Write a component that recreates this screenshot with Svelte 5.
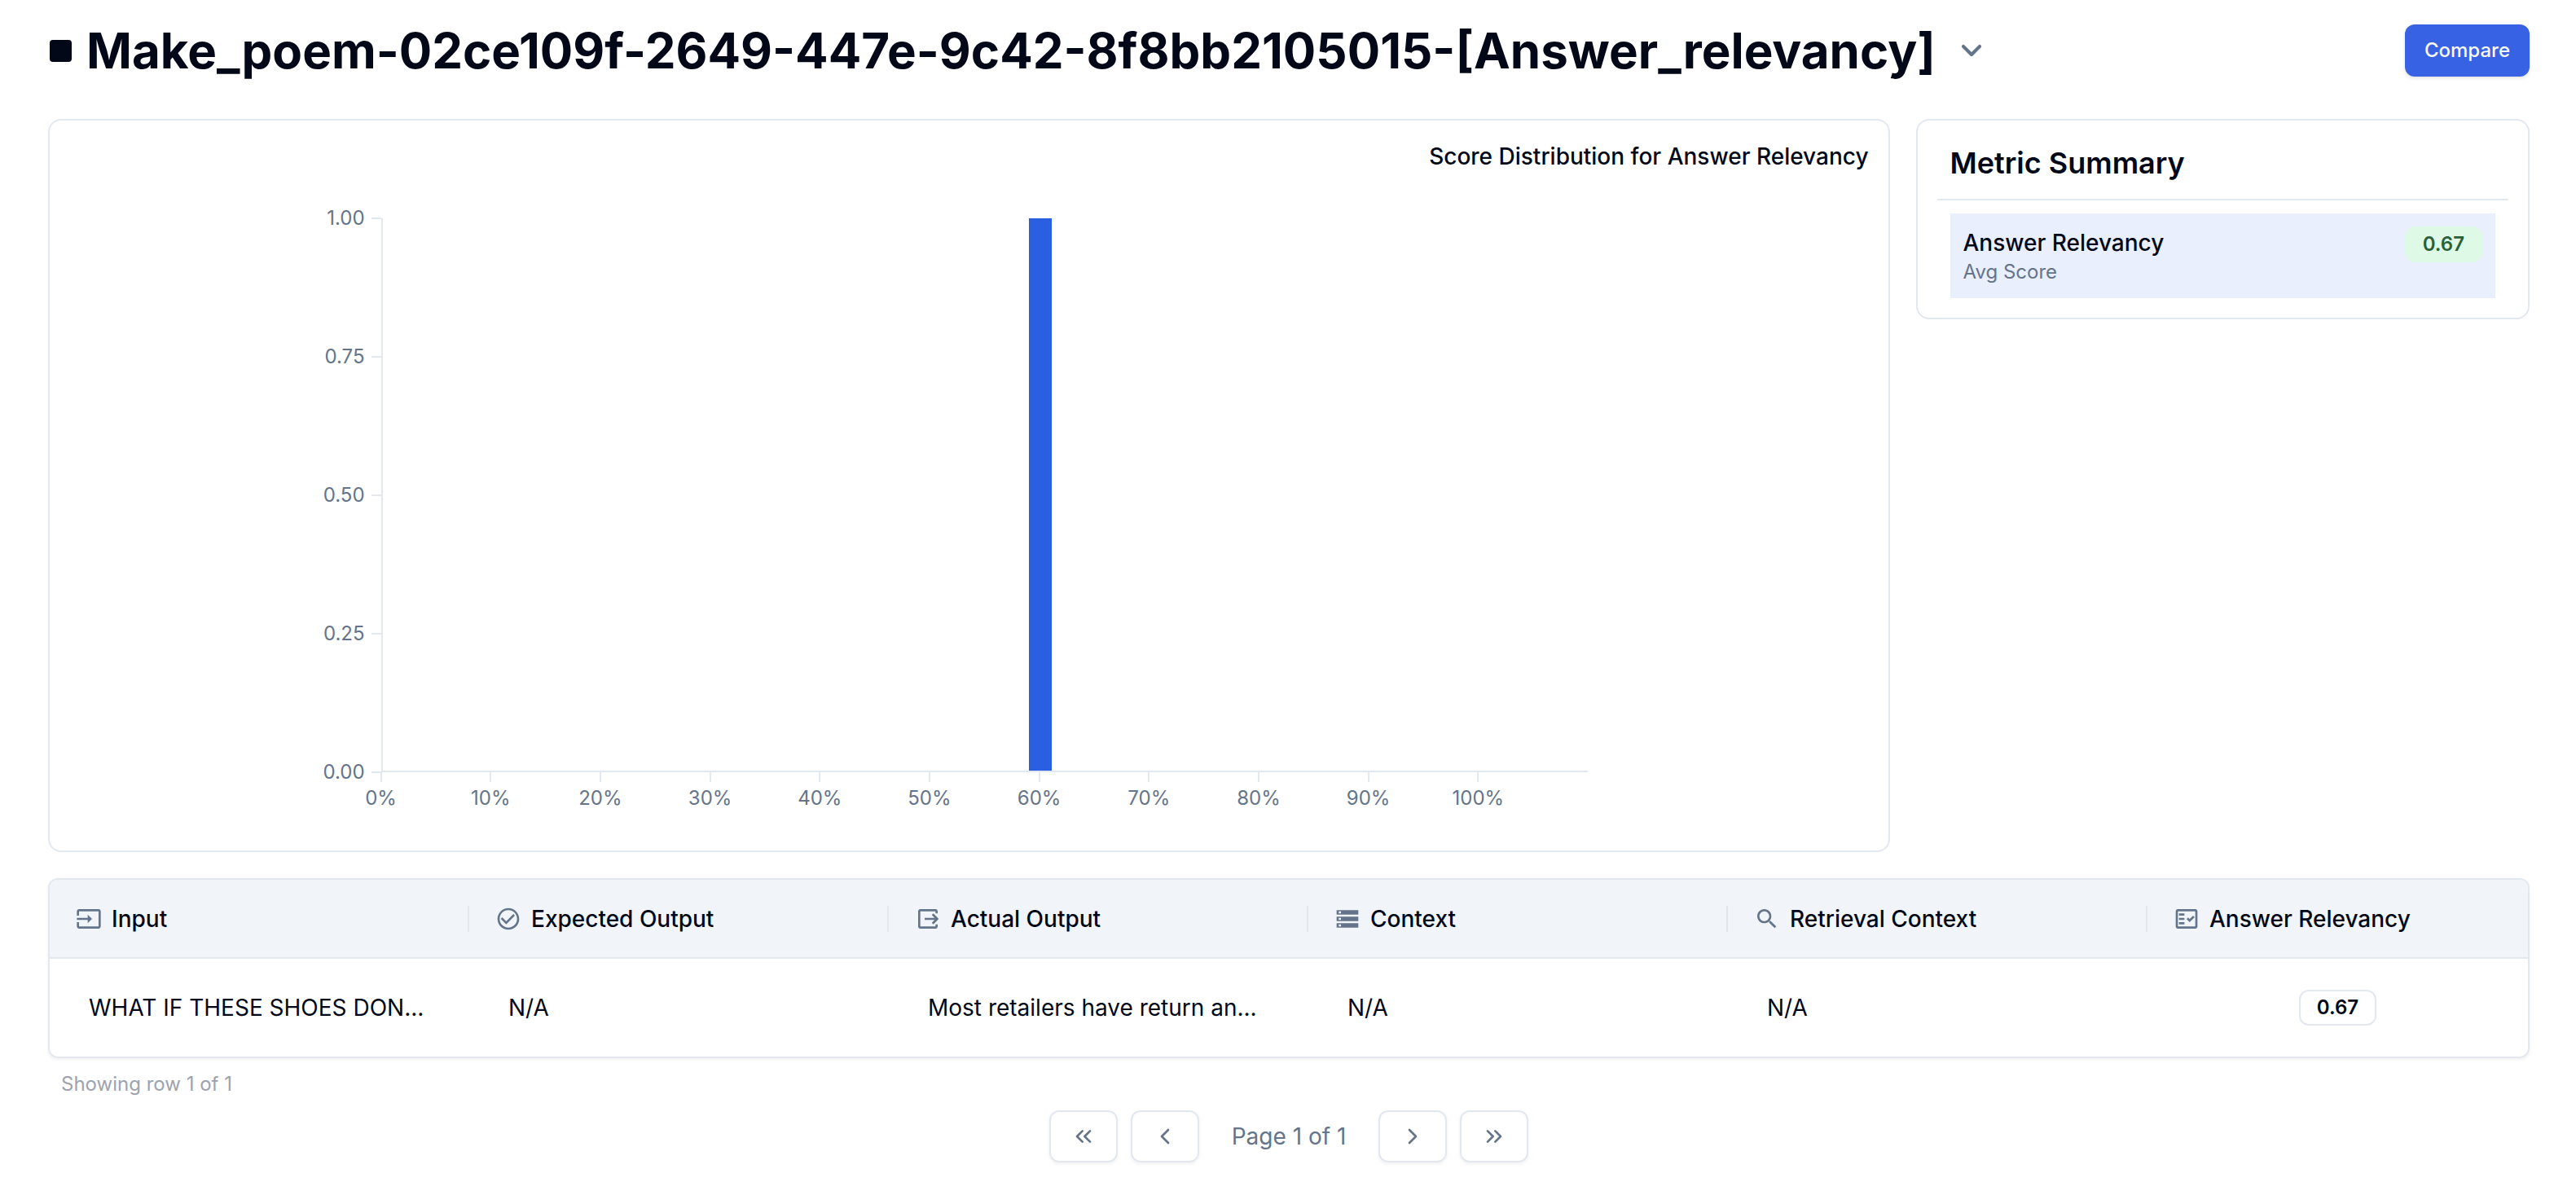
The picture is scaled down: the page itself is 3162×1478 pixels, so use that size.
<script>
  const ticksY = ['1.00', '0.75', '0.50', '0.25', '0.00'];
  const bins = [0, 0, 0, 0, 0, 0, 1, 0, 0, 0, 0];
  const columns = [
    { label: 'Input', icon: 'input' },
    { label: 'Expected Output', icon: 'check' },
    { label: 'Actual Output', icon: 'output' },
    { label: 'Context', icon: 'storage' },
    { label: 'Retrieval Context', icon: 'search' },
    { label: 'Answer Relevancy', icon: 'fact' }
  ];
  const icons = {
    input: 'M21 3.01H3c-1.1 0-2 .9-2 2V9h2V4.99h18v14.03H3V15H1v4.01c0 1.1.9 1.98 2 1.98h18c1.1 0 2-.88 2-1.98v-14c0-1.11-.9-2-2-2zM11 16l4-4-4-4v3H1v2h10v3z',
    check: 'M16.59 7.58L10 14.17l-3.59-3.58L5 12l5 5 8-8zM12 2C6.48 2 2 6.48 2 12s4.48 10 10 10 10-4.48 10-10S17.52 2 12 2zm0 18c-4.42 0-8-3.58-8-8s3.58-8 8-8 8 3.58 8 8-3.58 8-8 8z',
    output: 'M17 17l5-5-5-5-1.41 1.41L18.17 11H9v2h9.17l-2.58 2.59L17 17zM19 19H5V5h14v2h2V5c0-1.1-.89-2-2-2H5c-1.1 0-2 .9-2 2v14c0 1.1.9 2 2 2h14c1.1 0 2-.9 2-2v-2h-2v2z',
    storage: 'M2 20h20v-4H2v4zm2-3h2v2H4v-2zM2 4v4h20V4H2zm4 3H4V5h2v2zm-4 7h20v-4H2v4zm2-3h2v2H4v-2z',
    search: 'M15.5 14h-.79l-.28-.27C15.41 12.59 16 11.11 16 9.5 16 5.91 13.09 3 9.5 3S3 5.91 3 9.5 5.91 16 9.5 16c1.61 0 3.09-.59 4.23-1.57l.27.28v.79l5 4.99L20.49 19l-4.99-5zm-6 0C7.01 14 5 11.99 5 9.5S7.01 5 9.5 5 14 7.01 14 9.5 11.99 14 9.5 14z',
    fact: 'M20 3H4c-1.1 0-2 .9-2 2v14c0 1.1.9 2 2 2h16c1.1 0 2-.9 2-2V5c0-1.1-.9-2-2-2zm0 16H4V5h16v14zM19.41 10.42L17.99 9l-3.17 3.17-1.41-1.42L12 12.16 14.82 15zM5 7h5v2H5zM5 11h5v2H5zM5 15h5v2H5z'
  };
</script>

{#snippet chevrons(paths)}
  <svg class="chev" viewBox="0 0 24 24" aria-hidden="true">
    {#each paths as d}<path {d} />{/each}
  </svg>
{/snippet}

<main>
  <header>
    <span class="square"></span>
    <h1>Make_poem-02ce109f-2649-447e-9c42-8f8bb2105015-[Answer_relevancy]</h1>
    <button class="toggle" aria-label="Switch run">
      <svg viewBox="0 0 24 24" aria-hidden="true"><path d="M6 9l6 6 6-6" /></svg>
    </button>
    <button class="compare">Compare</button>
  </header>

  <section class="top">
    <div class="card chart-card">
      <h2 class="chart-title">Score Distribution for Answer Relevancy</h2>
      <div class="chart">
        <div class="y-axis">
          {#each ticksY as t}<span>{t}</span>{/each}
        </div>
        <div class="plot">
          {#each bins as v}
            <div class="slot"><div class="bar" style="height: {v * 100}%"></div></div>
          {/each}
        </div>
        <div class="x-axis">
          {#each bins as _, i}<span><b>{i * 10}%</b></span>{/each}
        </div>
      </div>
    </div>

    <aside class="card summary">
      <h2>Metric Summary</h2>
      <div class="metric">
        <div>
          <p class="name">Answer Relevancy</p>
          <p class="sub">Avg Score</p>
        </div>
        <span class="score">0.67</span>
      </div>
    </aside>
  </section>

  <div class="table-wrap">
    <table>
      <thead>
        <tr>
          {#each columns as c}
            <th scope="col">
              <div class="head">
                <svg viewBox="0 0 24 24" aria-hidden="true"><path d={icons[c.icon]} /></svg>
                <span>{c.label}</span>
              </div>
            </th>
          {/each}
        </tr>
      </thead>
      <tbody>
        <tr>
          <td>WHAT IF THESE SHOES DON...</td>
          <td>N/A</td>
          <td>Most retailers have return an...</td>
          <td>N/A</td>
          <td>N/A</td>
          <td class="center"><span class="badge">0.67</span></td>
        </tr>
      </tbody>
    </table>
  </div>

  <p class="showing">Showing row 1 of 1</p>

  <nav aria-label="Pagination">
    <button aria-label="First page">{@render chevrons(['M11 17l-5-5 5-5', 'M18 17l-5-5 5-5'])}</button>
    <button aria-label="Previous page">{@render chevrons(['M15 18l-6-6 6-6'])}</button>
    <span>Page 1 of 1</span>
    <button aria-label="Next page">{@render chevrons(['M9 18l6-6-6-6'])}</button>
    <button aria-label="Last page">{@render chevrons(['M6 17l5-5-5-5', 'M13 17l5-5-5-5'])}</button>
  </nav>
</main>

<style>
  :global(body) {
    margin: 0;
    background: #fff;
  }
  * {
    box-sizing: border-box;
  }
  main {
    padding: 28px 57px 48px 59px;
    font-family: Inter, 'Liberation Sans', sans-serif;
    color: #020817;
    font-size: 28px;
    line-height: 40px;
  }
  h1, h2, p {
    margin: 0;
  }
  button {
    font: inherit;
    padding: 0;
    cursor: pointer;
  }
  header {
    display: flex;
    align-items: center;
    height: 68px;
    margin-bottom: 50px;
  }
  .square {
    width: 27px;
    height: 27px;
    margin: 0 18px 0 2px;
    border-radius: 4px;
    background: #020817;
  }
  h1 {
    font-size: 60px;
    line-height: 68px;
    font-weight: 700;
    white-space: nowrap;
  }
  .toggle {
    display: flex;
    margin-left: 24px;
    border: 0;
    background: none;
  }
  .toggle svg {
    width: 40px;
    height: 40px;
    fill: none;
    stroke: #64748b;
    stroke-width: 2.5;
    stroke-linecap: round;
    stroke-linejoin: round;
  }
  .compare {
    margin-left: auto;
    height: 64px;
    padding: 0 24px;
    border: 0;
    border-radius: 12px;
    background: #3662e3;
    color: #f8fafc;
    font-size: 24px;
    font-weight: 500;
    box-shadow: 0 2px 4px rgba(0, 0, 0, 0.12);
  }
  .top {
    display: grid;
    grid-template-columns: 3fr 1fr;
    gap: 32px;
    align-items: start;
  }
  .card {
    border: 2px solid #e2e8f0;
    border-radius: 16px;
  }
  .chart-card {
    height: 900px;
    padding: 24px;
  }
  .chart-title {
    text-align: right;
    font-size: 28px;
    font-weight: 500;
    line-height: 40px;
  }
  .chart {
    display: grid;
    grid-template: 680px auto / 80px 1fr;
    margin: 56px 15.6% 0 13.7%;
    color: #64748b;
    font-size: 24px;
    line-height: 28px;
  }
  .y-axis {
    display: flex;
    flex-direction: column;
    justify-content: space-between;
    margin: -14px 0;
  }
  .y-axis span {
    display: flex;
    align-items: center;
    justify-content: flex-end;
    gap: 8px;
  }
  .y-axis span::after {
    content: '';
    width: 12px;
    height: 2px;
    background: #e2e8f0;
  }
  .plot {
    display: grid;
    grid-template-columns: repeat(11, 1fr);
    border-left: 2px solid #e2e8f0;
    border-bottom: 2px solid #e2e8f0;
  }
  .slot {
    display: flex;
    align-items: flex-end;
  }
  .bar {
    width: 28px;
    margin-left: -14px;
    background: #2a5fe2;
  }
  .x-axis {
    grid-column: 2;
    display: grid;
    grid-template-columns: repeat(11, 1fr);
  }
  .x-axis span {
    display: flex;
    flex-direction: column;
    align-items: center;
    gap: 6px;
    margin-left: -100%;
  }
  .x-axis span::before {
    content: '';
    width: 2px;
    height: 12px;
    background: #e2e8f0;
  }
  .x-axis b {
    font-weight: 400;
  }
  .summary {
    padding: 24px;
  }
  .summary h2 {
    padding: 8px 16px 24px;
    border-bottom: 2px solid #e2e8f0;
    font-size: 36px;
    line-height: 40px;
    font-weight: 600;
  }
  .metric {
    display: flex;
    justify-content: space-between;
    align-items: flex-start;
    margin: 16px 16px 0;
    padding: 16px;
    background: #e9effc;
  }
  .name {
    font-weight: 500;
  }
  .sub {
    font-size: 24px;
    line-height: 32px;
    color: #64748b;
  }
  .score {
    padding: 6px 22px;
    border-radius: 12px;
    background: #dff9e7;
    color: #2b6139;
    font-size: 24px;
    line-height: 32px;
    font-weight: 600;
  }
  .table-wrap {
    margin-top: 32px;
    border: 2px solid #e2e8f0;
    border-radius: 12px;
    overflow: hidden;
    box-shadow: 0 2px 4px rgba(0, 0, 0, 0.06);
  }
  table {
    width: 100%;
    table-layout: fixed;
    border-collapse: separate;
    border-spacing: 0;
  }
  thead {
    background: #f1f5f9;
  }
  th {
    width: 16.93%;
    height: 97px;
    padding: 0;
    border-bottom: 2px solid #e2e8f0;
    font-weight: 500;
    text-align: left;
  }
  th:last-child {
    width: auto;
  }
  .head {
    display: flex;
    align-items: center;
    gap: 12px;
    height: 32px;
    padding-left: 32px;
    border-right: 2px solid #e2e8f0;
  }
  th:last-child .head {
    border-right: 0;
  }
  .head svg {
    width: 32px;
    height: 32px;
    fill: #64748b;
  }
  td {
    height: 120px;
    padding: 0 48px;
    white-space: nowrap;
  }
  .center {
    text-align: center;
  }
  .badge {
    display: inline-block;
    padding: 4px 20px;
    border: 2px solid #e2e8f0;
    border-radius: 12px;
    font-size: 24px;
    line-height: 32px;
    font-weight: 600;
  }
  .showing {
    margin: 16px 16px 0;
    font-size: 24px;
    line-height: 32px;
    color: #9ca3af;
  }
  nav {
    display: flex;
    justify-content: center;
    align-items: center;
    gap: 16px;
    margin-top: 16px;
    color: #64748b;
  }
  nav span {
    margin: 0 24px;
  }
  nav button {
    display: flex;
    align-items: center;
    justify-content: center;
    width: 84px;
    height: 64px;
    border: 2px solid #e2e8f0;
    border-radius: 12px;
    background: #fff;
    box-shadow: 0 2px 4px rgba(0, 0, 0, 0.06);
  }
  .chev {
    width: 32px;
    height: 32px;
    fill: none;
    stroke: #64748b;
    stroke-width: 2;
    stroke-linecap: round;
    stroke-linejoin: round;
  }
</style>
